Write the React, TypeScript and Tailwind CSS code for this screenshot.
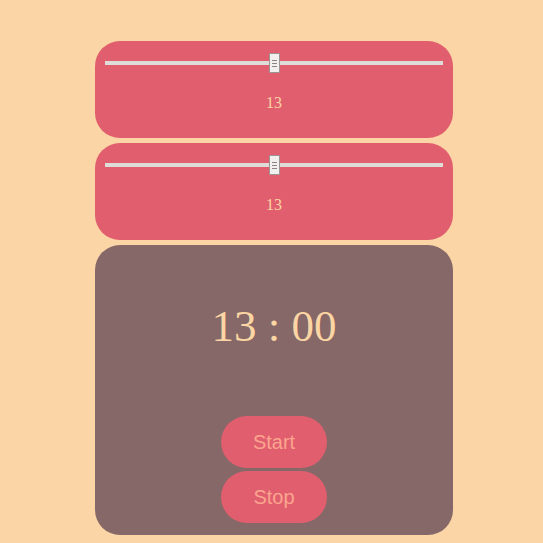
import { useState } from "react";

function Slider({ value }: { value: number }) {
  return (
    <div className="h-[97px] rounded-[25px] bg-[#e15e6e] px-[10px] pt-[12px]">
      <div className="relative h-[20px]">
        <div className="absolute left-0 right-0 top-[8px] h-[4px] bg-[#dedbd8]" />
        <div className="absolute left-[164px] top-0 flex h-[20px] w-[11px] flex-col items-center justify-center gap-[2px] rounded-[1px] border border-[#9a9593] bg-[#f2f0ee]">
          <span className="block h-px w-[5px] bg-[#8a8583]" />
          <span className="block h-px w-[5px] bg-[#8a8583]" />
          <span className="block h-px w-[5px] bg-[#8a8583]" />
        </div>
      </div>
      <div className="mt-[18px] text-center font-['Liberation_Serif',serif] text-[16px] text-[#fbd5a3]">
        {value}
      </div>
    </div>
  );
}

export default function App() {
  const [minutes] = useState(13);

  return (
    <div className="min-h-[543px] bg-[#fbd5a5] pt-[41px]">
      <div className="ml-[95px] flex w-[358px] flex-col gap-[5px]">
        <Slider value={minutes} />
        <Slider value={minutes} />
        <div className="flex h-[290px] flex-col items-center rounded-[25px] bg-[#866868]">
          <div className="mt-[49px] font-['Liberation_Serif',serif] text-[45px] leading-[64px] text-[#fbd5a3]">
            {minutes} : 00
          </div>
          <div className="mt-[58px] flex flex-col gap-[3px]">
            <button className="h-[52px] w-[106px] rounded-full bg-[#e15e6e] font-['Liberation_Sans',sans-serif] text-[20px] text-[#fba58e]">
              Start
            </button>
            <button className="h-[52px] w-[106px] rounded-full bg-[#e15e6e] font-['Liberation_Sans',sans-serif] text-[20px] text-[#fba58e]">
              Stop
            </button>
          </div>
        </div>
      </div>
    </div>
  );
}
